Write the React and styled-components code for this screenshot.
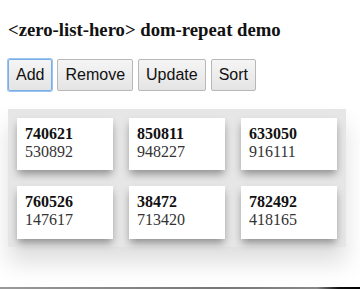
import React from "react";
import styled, { createGlobalStyle } from "styled-components";

const GlobalStyle = createGlobalStyle`
  html, body {
    margin: 0;
    background: #fff;
  }
  body {
    padding: 8px;
    font-family: "Liberation Serif", "Times New Roman", serif;
    color: #000;
  }
`;

const Page = styled.div`
  display: flex;
  flex-direction: column;
  width: 344px;
`;

const Heading = styled.h3`
  margin: 10.7px 0 18px;
  font-family: "Liberation Serif", "Times New Roman", serif;
  font-size: 18.72px;
  font-weight: bold;
  color: #111;
`;

const Toolbar = styled.div`
  display: flex;
  gap: 5px;
`;

const Button = styled.button`
  height: 32px;
  padding: 0 7px;
  font-family: "Liberation Sans", Arial, sans-serif;
  font-size: 16px;
  color: #111;
  background: linear-gradient(#f5f5f5, #e4e4e4);
  border: 1px solid ${(p) => (p.$focused ? "#7aaee6" : "#b8b8b8")};
  border-radius: 2px;
  box-shadow: ${(p) => (p.$focused ? "0 0 0 1px #9cc3ee" : "none")};
`;

const List = styled.div`
  margin-top: 18px;
  width: 338px;
  box-sizing: border-box;
  display: grid;
  grid-template-columns: repeat(3, 96px);
  column-gap: 16px;
  row-gap: 16px;
  padding: 9px 9px 8px 9px;
  background: #e6e6e6;
  box-shadow: 0 16px 22px rgba(0, 0, 0, 0.13);
`;

const Card = styled.div`
  height: ${(p) => p.$h}px;
  box-sizing: border-box;
  padding: 7px 8px;
  background: #fff;
  box-shadow: 0 5px 8px -1px rgba(0, 0, 0, 0.38);
  font-size: 16px;
  line-height: 18px;
`;

const Primary = styled.div`
  font-weight: bold;
  color: #111;
`;

const Secondary = styled.div`
  color: #333;
`;

const BottomBar = styled.div`
  margin: 40px -8px 0;
  width: 360px;
  height: 3px;
  background: linear-gradient(90deg, #9a9a9a, #777 60%, #888 88%, #111 94%, #000);
`;

const items = [
  ["740621", "530892"],
  ["850811", "948227"],
  ["633050", "916111"],
  ["760526", "147617"],
  ["38472", "713420"],
  ["782492", "418165"],
];

export default function App() {
  return (
    <Page>
      <GlobalStyle />
      <Heading>&lt;zero-list-hero&gt; dom-repeat demo</Heading>
      <Toolbar>
        <Button $focused>Add</Button>
        <Button>Remove</Button>
        <Button>Update</Button>
        <Button>Sort</Button>
      </Toolbar>
      <List>
        {items.map(([a, b], i) => (
          <Card key={a} $h={i < 3 ? 52 : 53}>
            <Primary>{a}</Primary>
            <Secondary>{b}</Secondary>
          </Card>
        ))}
      </List>
      <BottomBar />
    </Page>
  );
}
